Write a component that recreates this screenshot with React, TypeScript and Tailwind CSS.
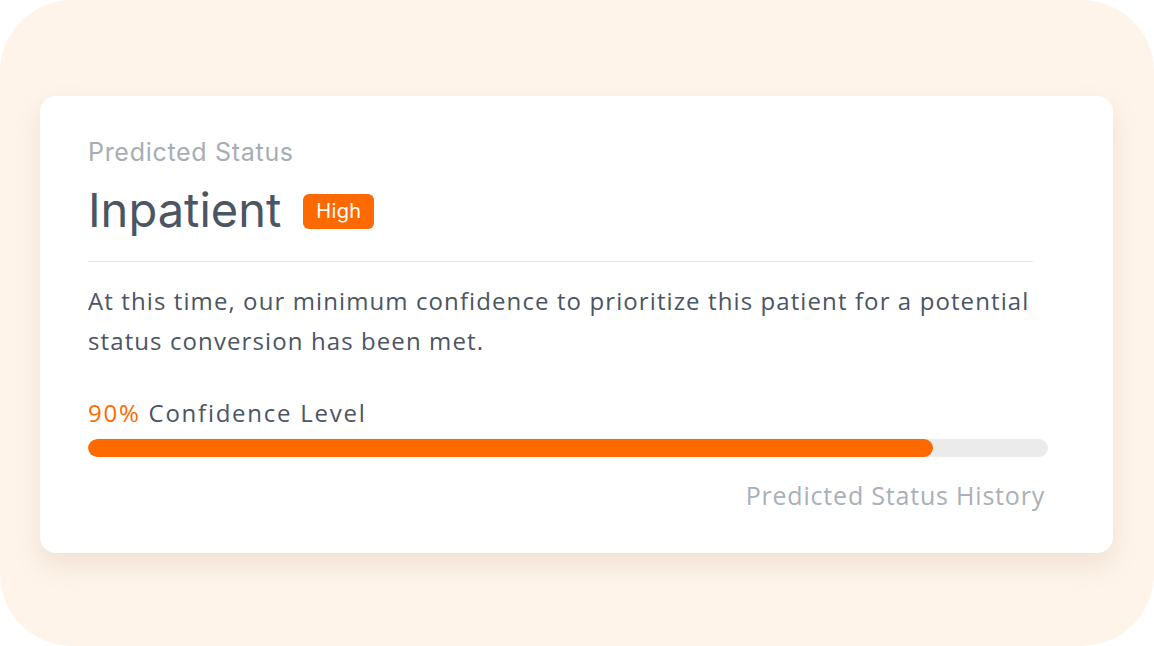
import React from 'react';

const App: React.FC = () => {
  const confidence = 88;

  return (
    <div className="w-[1154px] h-[646px] bg-white">
      <div className="w-full h-full bg-[#fef4ea] rounded-[72px] pt-[96px] px-[40px]">
        {/* Card */}
        <div className="w-[1073px] h-[457px] bg-white rounded-[16px] shadow-[0_12px_24px_rgba(180,140,100,0.18)] pl-[48px] pt-[38px]">
          <p className="text-[25px] leading-[36px] tracking-[0.7px] text-[#a6adb5] font-['Inter',sans-serif]">Predicted Status</p>
          <div className="flex items-center gap-[22px] mt-[12px]">
            <h1 className="text-[47px] leading-[56px] text-[#4b5563] font-['Inter',sans-serif]">Inpatient</h1>
            <span className="bg-[#ff6a00] text-white text-[20px] leading-[35px] px-[13px] tracking-[0.3px] rounded-[6px] font-['Inter',sans-serif] mt-[2px]">High</span>
          </div>
          <div className="w-[945px] h-px bg-[#e5e7eb] mt-[23px]" />
          <p className="w-[960px] mt-[19px] text-[24px] leading-[40px] tracking-[1.1px] text-[#4b5563] font-['Open_Sans',sans-serif]">
            At this time, our minimum confidence to prioritize this patient for a potential status conversion has been met.
          </p>
          <p className="mt-[36px] text-[24px] leading-[32px] tracking-[1.75px] text-[#4b5563] font-['Open_Sans',sans-serif]">
            <span className="text-[#ff6a00]">90%</span> Confidence Level
          </p>
          <div className="w-[960px] h-[18px] rounded-full bg-[#ebebeb] mt-[10px] overflow-hidden">
            <div className="h-full rounded-full bg-[#ff6a00]" style={{ width: `${confidence}%` }} />
          </div>
          <div className="w-[957px] flex justify-end mt-[22px]">
            <span className="text-[25px] leading-[32px] tracking-[0.8px] text-[#a9b0b8] font-['Open_Sans',sans-serif]">Predicted Status History</span>
          </div>
        </div>
      </div>
    </div>
  );
};

export default App;
